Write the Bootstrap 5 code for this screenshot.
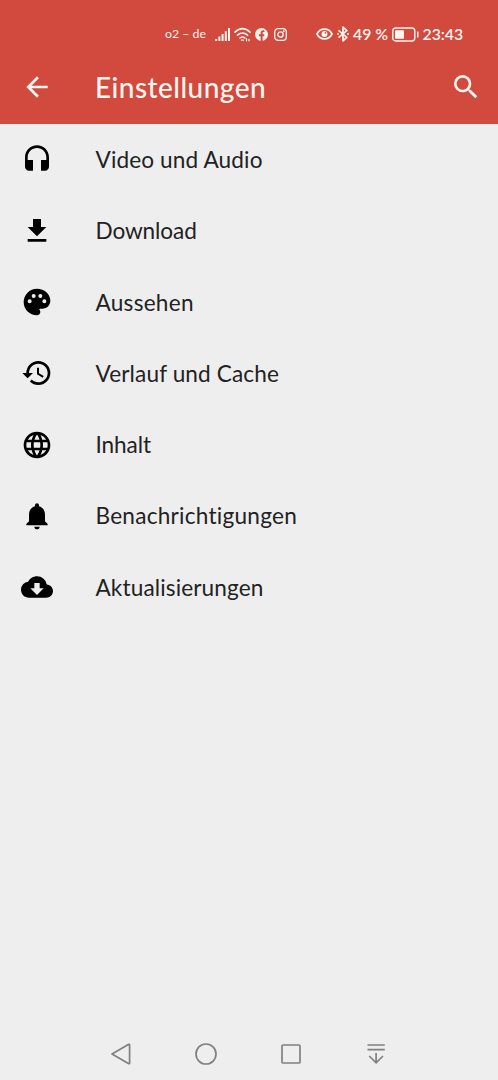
<!DOCTYPE html>
<html lang="de">
<head>
<meta charset="utf-8">
<meta name="viewport" content="width=device-width, initial-scale=1">
<title>Einstellungen</title>
<link rel="stylesheet" href="https://cdn.jsdelivr.net/npm/bootstrap@5.3.0/dist/css/bootstrap.min.css">
<style>
body{background:#eee;color:#222;font-family:Lato,"Noto Sans",sans-serif;height:1080px;overflow:hidden}
svg{display:block;flex:none}
.app-head{background:#d2493d;color:#fff5ef;height:124px}
.status-line{height:50px;padding:18px 30px 0 165px;line-height:32px}
.carrier{font-size:12.3px;width:50px}
.status-num{font-size:15.8px;font-weight:600;white-space:nowrap}
.title-bar{height:74px;padding:0 16px 0 21px}
.title-text{font-size:28px;font-weight:500;line-height:74px;margin-left:42px;letter-spacing:.45px;font-variant-ligatures:none}
.entry{height:71.25px;padding-left:21px;background:transparent;border:0;font-size:22.6px;letter-spacing:.12px;color:#222}
.entry svg{color:#000}
.entry span{margin-left:42.5px;line-height:30px;padding-top:1px}
.tight{letter-spacing:-.1px}
.wide{letter-spacing:.25px}
.sys-nav{height:52px;padding:0 109px 0 108px;color:#808080}
</style>
</head>
<body class="d-flex flex-column">
<header class="app-head">
<div class="status-line d-flex align-items-center">
<span class="carrier text-nowrap">o2 – de</span>
<svg width="16" height="15" viewBox="0 0 16 15" fill="none" stroke="currentColor" stroke-width="2"><path d="M1.2 14v-2M4.4 14v-4.5M7.6 14V7M10.8 14V4.3M14 14V1"/></svg>
<svg style="margin-left:3px" width="17" height="15" viewBox="0 0 17 15" fill="none" stroke="currentColor" stroke-width="1.6" stroke-linecap="round"><path d="M1 5.2Q8.5-1.8 16 5.2M3.5 8.2Q8.5 3.8 13.5 8.2M6 11Q8.5 9 11 11"/><path d="M7.5 13.2h2M12.5 11.8v2M15 12.4v1.4" stroke-width="1.3"/></svg>
<svg style="margin-left:4px" width="13" height="13" viewBox="0 0 13 13"><circle cx="6.5" cy="6.5" r="6.5" fill="currentColor"/><path d="M5.6 13V8.2H3.9V6.3h1.7V5c0-1.9 1-2.8 2.6-2.8l1.2.1V4h-.8c-.8 0-1 .4-1 1v1.3h1.8l-.3 1.9H7.6V13z" fill="#d2493d"/></svg>
<svg style="margin-left:6px" width="13" height="13" viewBox="0 0 13 13" fill="none" stroke="currentColor" stroke-width="1.3"><rect x=".7" y=".7" width="11.6" height="11.6" rx="3.4"/><circle cx="6.5" cy="6.5" r="2.7"/><circle cx="9.8" cy="3.2" r=".35"/></svg>
<svg style="margin-left:28.5px" width="17" height="12" viewBox="0 0 16 11" fill="none" stroke="currentColor" stroke-width="1.6"><path d="M.9 5.5C4.1-.6 11.9-.6 15.1 5.5 11.9 11.6 4.1 11.6.9 5.5z"/><circle cx="8" cy="5.5" r="2.8" fill="currentColor" stroke="none"/><circle cx="9" cy="4.4" r=".8" fill="#d2493d" stroke="none"/></svg>
<svg style="margin-left:4.5px" width="12" height="16" viewBox="0 0 12 16" fill="none" stroke="currentColor" stroke-width="1.7" stroke-linejoin="round"><path d="M1.5 4.4 9.8 11.4 6 14.8V1.2l3.8 3.4-8.3 7"/><path d="M0 8h2M10 8h2"/></svg>
<span class="status-num" style="margin-left:4px;width:39px">49 %</span>
<svg width="27" height="15" viewBox="0 0 27 15" fill="none" stroke="currentColor" stroke-width="1.4"><rect x=".8" y="1" width="22" height="13" rx="3"/><rect x="3" y="3.3" width="9" height="8.4" rx="1" fill="currentColor" stroke="none"/><path d="M25.8 4.5v6"/></svg>
<span class="status-num" style="margin-left:3.5px">23:43</span>
</div>
<div class="title-bar d-flex align-items-center">
<svg width="32" height="32" viewBox="0 0 24 24" fill="currentColor"><path d="M20 11H7.83l5.59-5.59L12 4l-8 8 8 8 1.41-1.41L7.83 13H20v-2z"/></svg>
<h1 class="title-text mb-0">Einstellungen</h1>
<svg class="ms-auto" width="32" height="32" viewBox="0 0 24 24" fill="currentColor"><path d="M15.5 14h-.79l-.28-.27A6.471 6.471 0 0 0 16 9.5 6.5 6.5 0 1 0 9.5 16c1.61 0 3.09-.59 4.23-1.57l.27.28v.79l5 4.99L20.49 19l-4.99-5zm-6 0C7.01 14 5 11.99 5 9.5S7.01 5 9.5 5 14 7.01 14 9.5 11.99 14 9.5 14z"/></svg>
</div>
</header>
<main class="list-group list-group-flush flex-grow-1">
<a class="entry list-group-item d-flex align-items-center py-0"><svg width="32" height="32" viewBox="0 0 24 24"><path d="M12 1c-4.97 0-9 4.03-9 9v7c0 1.66 1.34 3 3 3h3v-8H5v-2c0-3.87 3.13-7 7-7s7 3.13 7 7v2h-4v8h3c1.66 0 3-1.34 3-3v-7c0-4.97-4.03-9-9-9z"/></svg><span>Video und Audio</span></a>
<a class="entry list-group-item d-flex align-items-center py-0"><svg width="32" height="32" viewBox="0 0 24 24"><path d="M19 9h-4V3H9v6H5l7 7 7-7zM5 18v2h14v-2H5z"/></svg><span class="tight">Download</span></a>
<a class="entry list-group-item d-flex align-items-center py-0"><svg width="32" height="32" viewBox="0 0 24 24"><path d="M12 2C6.49 2 2 6.49 2 12s4.49 10 10 10c1.38 0 2.5-1.12 2.5-2.5 0-.61-.23-1.2-.64-1.67-.08-.1-.13-.21-.13-.33 0-.28.22-.5.5-.5H16c3.31 0 6-2.69 6-6 0-4.96-4.49-9-10-9zM6.5 13a1.5 1.5 0 1 1 0-3 1.5 1.5 0 0 1 0 3zm3-4a1.5 1.5 0 1 1 0-3 1.5 1.5 0 0 1 0 3zm5 0a1.5 1.5 0 1 1 0-3 1.5 1.5 0 0 1 0 3zm3 4a1.5 1.5 0 1 1 0-3 1.5 1.5 0 0 1 0 3z"/></svg><span class="wide">Aussehen</span></a>
<a class="entry list-group-item d-flex align-items-center py-0"><svg width="32" height="32" viewBox="0 0 24 24"><path d="M13 3a9 9 0 0 0-9 9H1l3.89 3.89.07.14L9 12H6c0-3.87 3.13-7 7-7s7 3.13 7 7-3.13 7-7 7c-1.93 0-3.68-.79-4.94-2.06l-1.42 1.42A8.954 8.954 0 0 0 13 21a9 9 0 0 0 0-18zm-1 5v5l4.28 2.54.72-1.21-3.5-2.08V8H12z"/></svg><span>Verlauf und Cache</span></a>
<a class="entry list-group-item d-flex align-items-center py-0"><svg width="32" height="32" viewBox="0 0 24 24"><path d="M11.99 2C6.47 2 2 6.48 2 12s4.47 10 9.99 10C17.52 22 22 17.52 22 12S17.52 2 11.99 2zm6.93 6h-2.95a15.65 15.65 0 0 0-1.38-3.56A8.03 8.03 0 0 1 18.92 8zM12 4.04c.83 1.2 1.48 2.53 1.91 3.96h-3.82c.43-1.43 1.08-2.76 1.91-3.96zM4.26 14C4.1 13.36 4 12.69 4 12s.1-1.36.26-2h3.38c-.08.66-.14 1.32-.14 2s.06 1.34.14 2H4.26zm.82 2h2.95c.32 1.25.78 2.45 1.38 3.56A7.987 7.987 0 0 1 5.08 16zm2.95-8H5.08a7.987 7.987 0 0 1 4.33-3.56A15.65 15.65 0 0 0 8.03 8zM12 19.96c-.83-1.2-1.48-2.53-1.91-3.96h3.82c-.43 1.43-1.08 2.76-1.91 3.96zM14.34 14H9.66c-.09-.66-.16-1.32-.16-2s.07-1.35.16-2h4.68c.09.65.16 1.32.16 2s-.07 1.34-.16 2zm.25 5.56c.6-1.11 1.06-2.31 1.38-3.56h2.95a8.03 8.03 0 0 1-4.33 3.56zM16.36 14c.08-.66.14-1.32.14-2s-.06-1.34-.14-2h3.38c.16.64.26 1.31.26 2s-.1 1.36-.26 2h-3.38z"/></svg><span class="tight">Inhalt</span></a>
<a class="entry list-group-item d-flex align-items-center py-0"><svg width="32" height="32" viewBox="0 0 24 24"><path d="M12 22c1.1 0 2-.9 2-2h-4c0 1.1.89 2 2 2zm6-6v-5c0-3.07-1.64-5.64-4.5-6.32V4c0-.83-.67-1.5-1.5-1.5s-1.5.67-1.5 1.5v.68C7.63 5.36 6 7.92 6 11v5l-2 2v1h16v-1l-2-2z"/></svg><span class="wide">Benachrichtigungen</span></a>
<a class="entry list-group-item d-flex align-items-center py-0"><svg width="32" height="32" viewBox="0 0 24 24"><path d="M19.35 10.04A7.49 7.49 0 0 0 12 4C9.11 4 6.6 5.64 5.35 8.04A5.994 5.994 0 0 0 0 14c0 3.31 2.69 6 6 6h13c2.76 0 5-2.24 5-5 0-2.64-2.05-4.78-4.65-4.96zM17 13l-5 5-5-5h3V9h4v4h3z"/></svg><span>Aktualisierungen</span></a>
</main>
<nav class="sys-nav d-flex justify-content-between align-items-center">
<svg width="26" height="26" viewBox="0 0 26 26" fill="none" stroke="currentColor" stroke-width="1.7" stroke-linejoin="round"><path d="M4 13 20.8 3.3Q21.6 3 21.6 4v18q0 1-.8.7z"/></svg>
<svg width="26" height="26" viewBox="0 0 26 26" fill="none" stroke="currentColor" stroke-width="1.7"><circle cx="13" cy="13" r="10"/></svg>
<svg width="26" height="26" viewBox="0 0 26 26" fill="none" stroke="currentColor" stroke-width="1.7"><rect x="4" y="4" width="18" height="18" rx="1"/></svg>
<svg width="26" height="26" viewBox="0 0 26 26" fill="none" stroke="currentColor" stroke-width="1.7"><path d="M4.5 4h17.3M4.5 8.7h17.3M13.1 12v9.6M6.2 15l6.9 6.9L20 15"/></svg>
</nav>
<script src="https://cdn.jsdelivr.net/npm/bootstrap@5.3.0/dist/js/bootstrap.bundle.min.js"></script>
</body>
</html>
